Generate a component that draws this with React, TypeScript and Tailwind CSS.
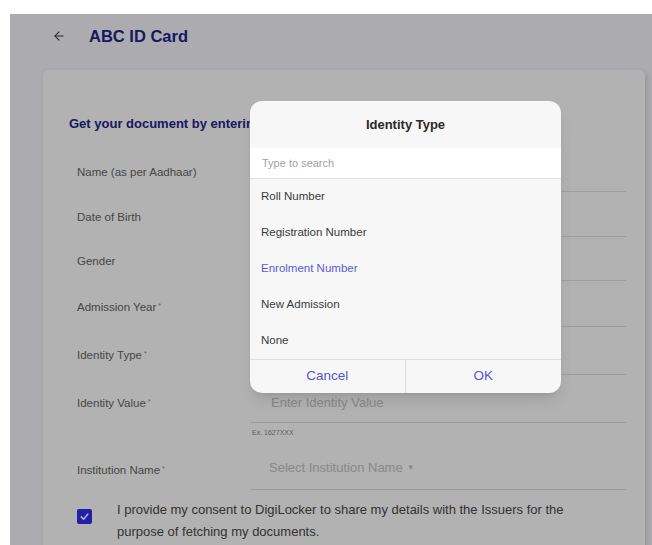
import { ArrowLeft } from "lucide-react";

const fields = [
  { label: "Name (as per Aadhaar)", h: "h-[45px]" },
  { label: "Date of Birth", h: "h-[45px]" },
  { label: "Gender", h: "h-[44px]" },
  { label: "Admission Year", h: "h-[46px]", required: true },
  { label: "Identity Type", h: "h-[48px]", required: true },
];

const options = [
  "Roll Number",
  "Registration Number",
  "Enrolment Number",
  "New Admission",
  "None",
];

function FieldLabel({ label, required }: { label: string; required?: boolean }) {
  return (
    <div className="w-[173px] shrink-0 pb-[13px] text-[11.5px] leading-[14px] text-[#666]">
      {label}
      {required && <sup className="ml-[2px] text-[7px] text-[#8a8a8a]">*</sup>}
    </div>
  );
}

function IdentityTypeModal() {
  return (
    <div className="absolute left-[240px] top-[87px] z-20 w-[311px] overflow-hidden rounded-[12px] bg-[#f7f7f7] shadow-lg">
      <div className="flex h-[47px] items-center justify-center text-[13px] font-bold text-[#2a2a2a]">
        Identity Type
      </div>
      <div className="flex h-[31px] items-center border-b border-[#dedede] bg-white pl-[12px] text-[11px] text-[#a0a0a0]">
        Type to search
      </div>
      <ul>
        {options.map((opt) => (
          <li
            key={opt}
            className={
              opt === "Enrolment Number"
                ? "flex h-[36px] items-center pl-[11px] text-[11.5px] text-[#5a5ad8]"
                : "flex h-[36px] items-center pl-[11px] text-[11.5px] text-[#3a3a3a]"
            }
          >
            {opt}
          </li>
        ))}
      </ul>
      <div className="grid h-[34px] grid-cols-2 border-t border-[#dedede] text-[13.5px] text-[#5656d0]">
        <button className="flex items-center justify-center border-r border-[#dedede]">Cancel</button>
        <button className="flex items-center justify-center">OK</button>
      </div>
    </div>
  );
}

export default function App() {
  return (
    <div className="min-h-screen bg-white pl-[10px] pt-[14px] font-['Liberation_Sans',Arial,sans-serif]">
      <div className="relative h-[531px] overflow-hidden bg-[#f7f6fc]">
        {/* Header */}
        <div className="flex h-[44px] items-center pl-[42px]">
          <ArrowLeft size={14} strokeWidth={1.8} className="text-[#333]" />
          <h1 className="ml-[23px] text-[16.5px] font-bold text-[#24248c]">ABC ID Card</h1>
        </div>

        {/* Form card */}
        <div className="ml-[33px] mt-[12px] w-[602px] rounded-md bg-white pb-[40px] shadow-[2px_2px_6px_rgba(0,0,0,0.15)]">
          <h2 className="whitespace-nowrap pl-[26px] pt-[46px] text-[13px] font-bold leading-[16px] text-[#24248c]">
            Get your document by entering the details below
          </h2>

          <div className="mt-[15px] pl-[34px] pr-[19px]">
            {fields.map((f) => (
              <div key={f.label} className={`flex items-end ${f.h}`}>
                <FieldLabel label={f.label} required={f.required} />
                <div className="h-full flex-1 border-b border-[#e2e2e2]" />
              </div>
            ))}

            <div className="flex h-[48px] items-end">
              <FieldLabel label="Identity Value" required />
              <div className="flex h-full flex-1 items-end border-b border-[#e2e2e2] pb-[12px] pl-[21px] text-[13px] leading-[14px] text-[#c4c4c4]">
                Enter Identity Value
              </div>
            </div>
            <div className="flex h-[20px] items-center pl-[175px] text-[7px] text-[#8a8a8a]">Ex. 1627XXX</div>

            <div className="flex h-[47px] items-end">
              <FieldLabel label="Institution Name" required />
              <div className="flex h-full flex-1 items-end border-b border-[#e2e2e2] pb-[14px] pl-[19px] text-[13px] leading-[14px] text-[#c4c4c4]">
                Select Institution Name
                <span className="ml-[4px] text-[8px] leading-[14px]">▼</span>
              </div>
            </div>

            <div className="mt-[9px] flex items-start gap-[25px]">
              <div className="mt-[10px] flex h-[15px] w-[15px] shrink-0 items-center justify-center rounded-[2px] bg-[#2e2ef5]">
                <svg width="11" height="11" viewBox="0 0 12 12" fill="none">
                  <polyline points="2.5,6.5 5,9 9.5,3.5" stroke="white" strokeWidth="1.8" strokeLinecap="round" strokeLinejoin="round" />
                </svg>
              </div>
              <p className="whitespace-nowrap text-[13px] leading-[22px] text-[#4a4a4a]">
                I provide my consent to DigiLocker to share my details with the Issuers for the
                <br />
                purpose of fetching my documents.
              </p>
            </div>
          </div>
        </div>

        {/* Dim backdrop */}
        <div className="absolute inset-0 z-10 bg-black/30" />
        <IdentityTypeModal />
      </div>
    </div>
  );
}
